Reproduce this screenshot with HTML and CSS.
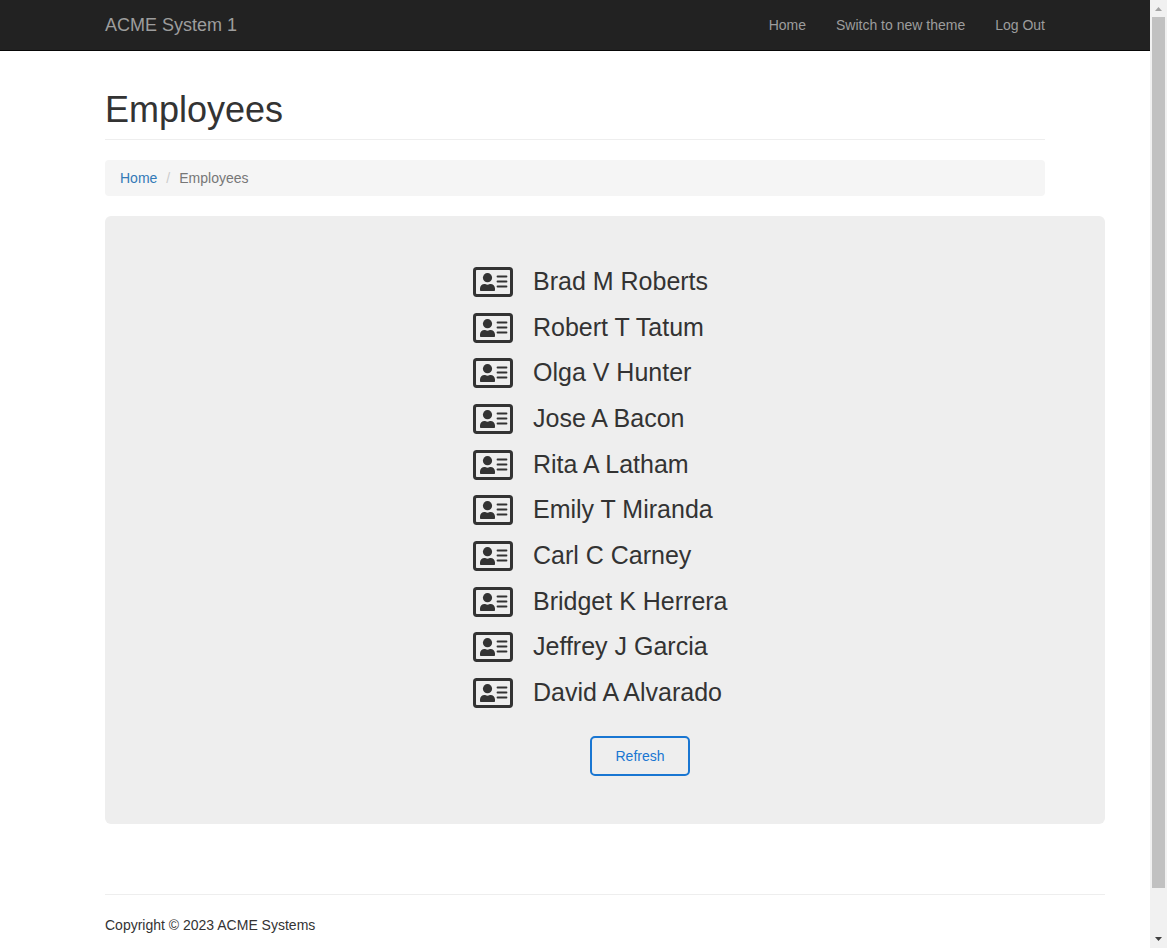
FILE: index.html
```html
<!DOCTYPE html>
<html lang="en">
<head>
<meta charset="utf-8">
<title>Employees - ACME System 1</title>
<link rel="stylesheet" href="styles.css">
</head>
<body>
<svg class="sprite" aria-hidden="true">
  <symbol id="card" viewBox="0 0 40 30">
    <rect x="1.5" y="1.5" width="37" height="27" rx="2.2" fill="none" stroke="currentColor" stroke-width="3"/>
    <circle cx="14.500" cy="10.700" r="4.600" fill="currentColor"/>
    <path d="M7 23.300v-1.700c0-2.500 2-4.500 4.500-4.500 .900 0 1.500.600 3 .600s2.100-.600 3-.600c2.500 0 4.500 2 4.500 4.500v1.700c0 .500-.300.700-.800.700H7.800c-.500 0-.800-.200-.800-.700z" fill="currentColor"/>
    <path d="M24.500 9.500h9M24.500 14.500h9M24.500 19.500h9" stroke="currentColor" stroke-width="1.800" stroke-linecap="round"/>
  </symbol>
</svg>
<div class="page">
  <header class="navbar">
    <div class="container navbar-inner">
      <a class="brand" href="#">ACME System 1</a>
      <nav class="nav">
        <a href="#">Home</a>
        <a href="#">Switch to new theme</a>
        <a href="#">Log Out</a>
      </nav>
    </div>
  </header>
  <main class="container">
    <h1 class="title">Employees</h1>
    <nav class="breadcrumb" aria-label="Breadcrumb">
      <a href="#">Home</a><span class="slash">/</span><span>Employees</span>
    </nav>
    <section class="panel">
      <div class="roster">
        <ul class="employees">
          <li><svg class="card"><use href="#card"/></svg><span class="name">Brad M Roberts</span></li>
          <li><svg class="card"><use href="#card"/></svg><span class="name">Robert T Tatum</span></li>
          <li><svg class="card"><use href="#card"/></svg><span class="name">Olga V Hunter</span></li>
          <li><svg class="card"><use href="#card"/></svg><span class="name">Jose A Bacon</span></li>
          <li><svg class="card"><use href="#card"/></svg><span class="name">Rita A Latham</span></li>
          <li><svg class="card"><use href="#card"/></svg><span class="name">Emily T Miranda</span></li>
          <li><svg class="card"><use href="#card"/></svg><span class="name">Carl C Carney</span></li>
          <li><svg class="card"><use href="#card"/></svg><span class="name">Bridget K Herrera</span></li>
          <li><svg class="card"><use href="#card"/></svg><span class="name">Jeffrey J Garcia</span></li>
          <li><svg class="card"><use href="#card"/></svg><span class="name">David A Alvarado</span></li>
        </ul>
        <div class="actions"><button class="refresh" type="button">Refresh</button></div>
      </div>
    </section>
    <footer class="footer">Copyright © 2023 ACME Systems</footer>
  </main>
</div>
<div class="scrollbar" aria-hidden="true">
  <svg class="arrow" viewBox="0 0 17 17"><path d="M5 11h7L8.500 7z" fill="#a3a3a3"/></svg>
  <div class="track"><div class="thumb"></div></div>
  <svg class="arrow" viewBox="0 0 17 17"><path d="M5 6h7L8.500 10z" fill="#404040"/></svg>
</div>
</body>
</html>
```
FILE: styles.css
```css
* {
  box-sizing: border-box;
}

body {
  display: flex;
  min-height: 100vh;
  margin: 0;
  background: #fff;
  color: #333;
  font: 14px/20px "Liberation Sans", Arial, sans-serif;
}

a {
  color: #337ab7;
  text-decoration: none;
}

.sprite {
  position: absolute;
  width: 0;
  height: 0;
}

.page {
  flex: 1;
  min-width: 0;
}

.container {
  max-width: 970px;
  margin: 0 auto;
  padding: 0 15px;
}

.navbar {
  background: #222;
  border-bottom: 1px solid #080808;
}

.navbar-inner,
.nav {
  display: flex;
}

.navbar-inner {
  justify-content: space-between;
  padding-top: 15px;
  padding-bottom: 15px;
}

.navbar a {
  color: #9d9d9d;
}

.brand {
  font-size: 18px;
}

.nav {
  gap: 30px;
}

.title {
  margin: 39px 0 20px;
  padding-bottom: 9px;
  border-bottom: 1px solid #eee;
  font-size: 36px;
  font-weight: 500;
  line-height: 40px;
}

.breadcrumb {
  display: flex;
  margin-bottom: 20px;
  padding: 8px 15px;
  border-radius: 4px;
  background: #f5f5f5;
  color: #777;
}

.slash {
  padding: 0 9px;
  color: #ccc;
}

.panel {
  display: flex;
  justify-content: center;
  margin-right: -60px;
  padding: 43px 0 48px;
  border-radius: 6px;
  background: #eee;
}

.roster {
  width: 264px;
}

.employees {
  display: grid;
  grid-auto-rows: 1fr;
  min-height: 457px;
  margin: 0;
  padding: 0;
  list-style: none;
  font-size: 25px;
  white-space: nowrap;
}

.employees li {
  display: flex;
  align-items: center;
  gap: 20px;
}

.name {
  padding-bottom: 2px;
}

.card {
  width: 40px;
  height: 30px;
}

.actions {
  display: flex;
  justify-content: center;
  margin-top: 20px;
  padding-left: 70px;
}

.refresh {
  width: 100px;
  height: 40px;
  border: 2px solid #1976d2;
  border-radius: 5px;
  background: transparent;
  color: #1976d2;
  font: inherit;
}

.footer {
  margin: 70px -60px 0 0;
  padding: 20px 0 12px;
  border-top: 1px solid #eee;
}

.scrollbar {
  display: flex;
  flex-direction: column;
  width: 17px;
  background: #f1f1f1;
}

.arrow {
  width: 17px;
  height: 17px;
}

.track {
  display: flex;
  flex: 1;
  flex-direction: column;
  padding: 0 2px;
}

.thumb {
  height: 95.3%;
  background: #c1c1c1;
}
```
